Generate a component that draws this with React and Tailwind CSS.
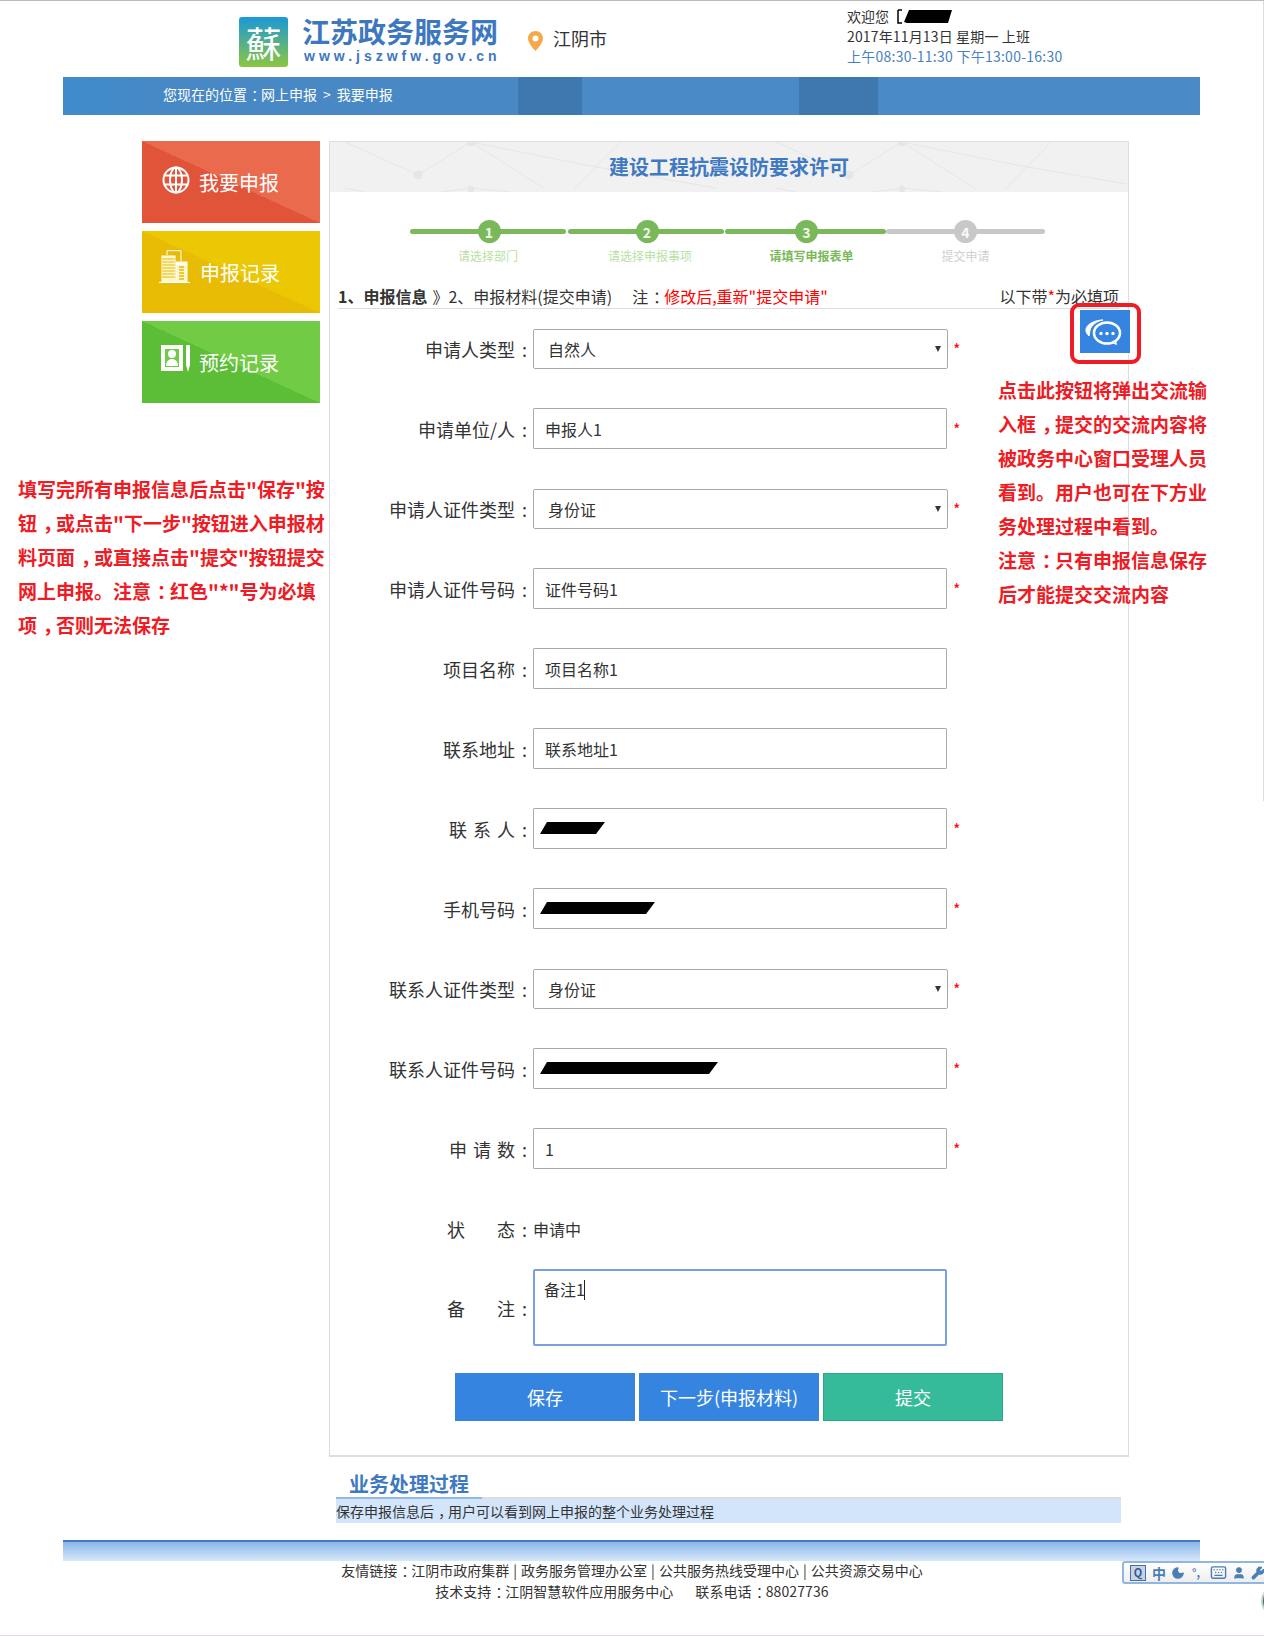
import React from 'react';
import { Moon, User, Wrench, Keyboard } from 'lucide-react';

const rows = [
  { label: '申请人类型', type: 'select', value: '自然人', required: true },
  { label: '申请单位/人', value: '申报人1', required: true },
  { label: '申请人证件类型', type: 'select', value: '身份证', required: true },
  { label: '申请人证件号码', value: '证件号码1', required: true },
  { label: '项目名称', value: '项目名称1' },
  { label: '联系地址', value: '联系地址1' },
  { label: '联 系 人', value: '', required: true, redact: 65 },
  { label: '手机号码', value: '', required: true, redact: 115 },
  { label: '联系人证件类型', type: 'select', value: '身份证', required: true },
  { label: '联系人证件号码', value: '', required: true, redact: 178 },
  { label: '申 请 数', value: '1', required: true },
];

const steps = [
  { n: 1, text: '请选择部门', w: 'w-[156px]', bar: 'bg-[#7ab85a]', dot: 'bg-[#7ab85a] ml-[2px]', color: 'text-[#b9dfa3]' },
  { n: 2, text: '请选择申报事项', w: 'w-[156px] ml-[2px]', bar: 'bg-[#7ab85a]', dot: 'bg-[#7ab85a] ml-[2px]', color: 'text-[#b9dfa3] ml-[8px]' },
  { n: 3, text: '请填写申报表单', w: 'w-[161px] ml-[1px]', bar: 'bg-[#7ab85a]', dot: 'bg-[#7ab85a] ml-[2px]', color: 'text-[#7ab85a] font-bold ml-[12px]' },
  { n: 4, text: '提交申请', w: 'w-[159px]', bar: 'bg-[#c8c8c8]', dot: 'bg-[#c8c8c8]', color: 'text-[#d0d0d0]' },
];

const noteLeft = [
  '填写完所有申报信息后点击"保存"按',
  '钮，或点击"下一步"按钮进入申报材',
  '料页面，或直接点击"提交"按钮提交',
  '网上申报。注意：红色"*"号为必填',
  '项，否则无法保存',
];

const noteRight = [
  '点击此按钮将弹出交流输',
  '入框，提交的交流内容将',
  '被政务中心窗口受理人员',
  '看到。用户也可在下方业',
  '务处理过程中看到。',
  '注意：只有申报信息保存',
  '后才能提交交流内容',
];

// 全角冒号、逗号在原图里靠中间，SC 字形靠左，挪一下
function punct(text) {
  return text.split(/([：，])/).map((part, i) =>
    part === '：' || part === '，'
      ? <span key={i} className="ml-[0.3em] tracking-[-0.3em]">{part}</span>
      : part
  );
}

function GlobeIcon() {
  return (
    <svg width="28" height="28" viewBox="0 0 28 28" fill="none" stroke="white" strokeWidth="2">
      <circle cx="14" cy="14" r="12.5" />
      <ellipse cx="14" cy="14" rx="6" ry="12.5" />
      <path d="M14 1.5v25M2 9.5h24M2 18.5h24" />
    </svg>
  );
}

function BuildingIcon() {
  return (
    <svg width="32" height="33" viewBox="0 0 32 33" fill="none" stroke="white" strokeWidth="1">
      <path d="M0 32.5h31" strokeWidth="1.2" />
      <path d="M8 5V.7h14V11" />
      <rect x="3" y="6" width="13" height="26" fill="#fff6c8" />
      <path d="M3 9h13M3 12h13M3 15h13M3 18h13M3 21h13M3 24h13M3 27h13" stroke="#e8bb05" />
      <rect x="17" y="12" width="11" height="20" fill="#fff6c8" />
      <path d="M17 14h11" strokeWidth="2" />
      <path d="M20 17h5M20 20h5M20 23h5M20 26h5M20 29h5" stroke="#e8bb05" strokeWidth="1.5" />
    </svg>
  );
}

function CardIcon() {
  return (
    <svg width="30" height="28" viewBox="0 0 30 28">
      <rect x="0" y="0" width="22" height="26" fill="white" />
      <rect x="4" y="4" width="14" height="18" fill="#72cb45" />
      <circle cx="11" cy="9" r="4" fill="white" />
      <path d="M5 21c0-5 3-7 6-7s6 2 6 7z" fill="white" />
      <path d="M25 1.5a2 2 0 0 1 4 0V20l-2 7-2-7z" fill="white" />
    </svg>
  );
}

function Star({ className = '' }) {
  return <span className={`text-[16px] leading-none text-[#f00] ${className}`}>*</span>;
}

function SideButton({ bg, icon, iconClass, children, textClass }) {
  return (
    <div className={`flex h-[82px] w-[178px] items-center text-[20px] text-white ${bg}`}>
      <div className={iconClass}>{icon}</div>
      <span className={textClass}>{children}</span>
    </div>
  );
}

function Redaction({ width }) {
  return (
    <svg className="absolute top-[13px] left-[7px]" width={width} height="14" viewBox={`0 0 ${width} 14`}>
      <polygon points={`7,1 ${width},1 ${width - 9},13 0,13`} fill="black" />
    </svg>
  );
}

function Colon() {
  return <span className="ml-[7px]">:</span>;
}

function FormRow({ row }) {
  const spaced = row.label.includes(' ');
  return (
    <div className="flex h-[80px] items-center">
      <label className="w-[197px] text-right text-[18px] whitespace-pre text-[#333]">
        <span className={spaced ? '[word-spacing:2px]' : ''}>{row.label}</span>
        <Colon />
      </label>
      {row.type === 'select' ? (
        <div className="relative ml-[6px] h-[40px] w-[415px]">
          <select
            defaultValue={row.value}
            className="h-full w-full appearance-none rounded-[2px] border border-[#aaa] bg-white pl-[14px] text-[16px] text-[#333]"
          >
            <option>{row.value}</option>
          </select>
          <span className="absolute top-[17px] right-[7px] h-0 w-0 border-x-[3.5px] border-t-[6px] border-x-transparent border-t-[#333]" />
        </div>
      ) : (
        <div className="relative -mt-[1px] ml-[6px] h-[41px] w-[414px]">
          <input
            defaultValue={row.value}
            className="h-full w-full rounded-[1px] border border-[#aaa] bg-white px-[11px] text-[16px] text-[#333]"
          />
          {row.redact && <Redaction width={row.redact} />}
        </div>
      )}
      {row.required && <Star className={`mt-0 ${row.type === 'select' ? 'ml-[5px]' : 'ml-[6px]'}`} />}
    </div>
  );
}

function ImeBar() {
  const blue = '#4a7fb5';
  return (
    <div className="absolute top-[1560px] left-[1122px] flex h-[23px] w-[150px] items-center overflow-hidden rounded-l-[3px] border-2 border-[#92b6e2] bg-[linear-gradient(#ffffff,#eeeeee)] pl-[6px]">
      <div className="flex h-[16px] w-[16px] items-center justify-center border border-[#4a6fa5] bg-[#c5d3e8] text-[11px] leading-none font-bold text-[#36598c]">Q</div>
      <span className="ml-[6px] w-[14px] text-[14px] leading-none font-bold text-[#4a7fb5]">中</span>
      <Moon className="ml-[5px]" size={14} color={blue} fill={blue} />
      <span className="ml-[7px] w-[12px] text-[11px] leading-none font-bold text-[#4a7fb5]">°,</span>
      <Keyboard className="ml-[6px]" size={17} color={blue} />
      <User className="ml-[5px]" size={14} color={blue} fill={blue} />
      <Wrench className="ml-[5px] shrink-0" size={14} color={blue} fill={blue} />
    </div>
  );
}

export default function App() {
  return (
    <div className="relative h-[1636px] w-[1264px] overflow-hidden border-t border-b border-t-[#bbb] border-b-[#e3dde6] bg-white font-['Noto_Sans_CJK_SC',sans-serif] text-[#333]">
      {/* header */}
      <header className="flex h-[76px] pl-[239px]">
        <div className="mt-[16px] flex h-[50px] w-[49px] items-center justify-center rounded-[3px] bg-[linear-gradient(#1a98d8,#8cc63f)] font-['Noto_Sans_CJK_TC',sans-serif] text-[36px] leading-[50px] text-white">
          蘇
        </div>
        <div className="ml-[14px] w-[210px] text-[#3d78bf]">
          <div className="mt-[12px] h-[34px] text-[28px] leading-[36px] font-bold">江苏政务服务网</div>
          <div className="ml-[2px] font-['Liberation_Sans',sans-serif] text-[14px] leading-[18px] font-bold tracking-[4px]">www.jszwfw.gov.cn</div>
        </div>
        <div className="ml-[16px] flex h-[76px] items-center">
          <svg width="15" height="20" viewBox="0 0 15 20" className="mt-[3px]">
            <path fillRule="evenodd" fill="#f5a94a" d="M7.5 0C3.4 0 0 3.2 0 7.2 0 11.5 4.7 17 7.5 20c2.8-3 7.5-8.5 7.5-12.8C15 3.2 11.6 0 7.5 0zm0 4.4a3 3 0 1 1 0 6 3 3 0 0 1 0-6z" />
          </svg>
          <span className="ml-[10px] -mt-[1px] text-[18px]">江阴市</span>
        </div>
        <div className="ml-[240px] pt-[5px] text-[14px] leading-[20px]">
          <div className="flex items-center">
            欢迎您
            <svg className="ml-[8px]" width="56" height="15" viewBox="0 0 56 15">
              <path d="M1 1h4M1 1v13h4" fill="none" stroke="black" strokeWidth="1.5" />
              <polygon points="7,13 12,1 55,1 51,14 10,14" fill="black" />
            </svg>
          </div>
          <div className="tracking-[0.15px]">2017年11月13日 星期一 上班</div>
          <div className="tracking-[0.25px] text-[#4a7fc1]">上午08:30-11:30 下午13:00-16:30</div>
        </div>
      </header>

      {/* breadcrumb */}
      <div className="mx-[63px] flex h-[38px] w-[1137px] items-center bg-[linear-gradient(90deg,#3f8bcb_0,#4888c4_120px,#4888c4_455px,#3f78ae_455px,#3f78ae_519px,#4a8bc7_519px,#4a8bc7_736px,#3f78ae_736px,#3f78ae_815px,#4a8bc7_815px)] pb-[4px] pl-[100px] text-[14px] whitespace-pre text-white">
        {punct('您现在的位置：网上申报')}
        <span className="mx-[6px]">&gt;</span>
        我要申报
      </div>

      {/* main */}
      <div className="mt-[26px] ml-[142px] flex items-start">
        <aside className="flex w-[178px] flex-col gap-[8px]">
          <SideButton
            bg="bg-[linear-gradient(to_top_right,#e2543a_50%,#e96a4c_50%)]"
            icon={<GlobeIcon />}
            iconClass="ml-[20px] -mt-[5px]"
            textClass="ml-[9px] mt-[2px]"
          >
            我要申报
          </SideButton>
          <SideButton
            bg="bg-[linear-gradient(to_top_right,#e8bb05_50%,#ecc704_50%)]"
            icon={<BuildingIcon />}
            iconClass="ml-[17px] -mt-[11px]"
            textClass="ml-[9px] mt-[2px]"
          >
            申报记录
          </SideButton>
          <SideButton
            bg="bg-[linear-gradient(to_top_right,#5cbd36_50%,#72cb45_50%)]"
            icon={<CardIcon />}
            iconClass="ml-[19px] -mt-[7px]"
            textClass="ml-[8px] mt-[1px]"
          >
            预约记录
          </SideButton>
        </aside>

        <section className="ml-[9px] h-[1316px] w-[800px] border border-b-2 border-[#dedede]">
          <div className="relative flex h-[50px] items-center justify-center overflow-hidden bg-[#f1f1f1]">
            <svg className="absolute inset-0" width="798" height="50" fill="none" stroke="#e6e6e6" strokeWidth="1">
              <path d="M15 0l73 33 53-33 74 47M141 0l120 24 125 22M290 0l-46 47M15 46l20 4M141 46l-30 4M141 46l40 4" />
              <path d="M446 0l73 33 53-33 74 47M572 0l120 24 105 18M721 0l-46 47M446 46l20 4M572 46l-30 4M572 46l40 4" />
              <circle cx="88" cy="33" r="4" fill="#e6e6e6" />
              <circle cx="519" cy="33" r="4" fill="#e6e6e6" />
              <circle cx="141" cy="0" r="4" fill="#e6e6e6" />
              <circle cx="572" cy="0" r="4" fill="#e6e6e6" />
              <circle cx="141" cy="47" r="3" fill="#e6e6e6" />
              <circle cx="572" cy="47" r="3" fill="#e6e6e6" />
            </svg>
            <h1 className="relative text-[20px] font-bold text-[#3f79c2]">建设工程抗震设防要求许可</h1>
          </div>

          {/* steps */}
          <div className="flex h-[90px] pt-[28px] pl-[80px]">
            {steps.map((s) => (
              <div key={s.n} className={`flex flex-col items-center ${s.w}`}>
                <div className="relative flex h-[23px] w-full items-center justify-center">
                  <div className={`absolute top-[9px] left-0 h-[5px] w-full rounded-full ${s.bar}`} />
                  <div className={`relative flex h-[23px] w-[23px] items-center justify-center rounded-full text-[14px] leading-none font-bold text-white/90 ${s.dot}`}>
                    {s.n}
                  </div>
                </div>
                <div className={`mt-[5px] text-[12px] leading-[16px] ${s.color}`}>{s.text}</div>
              </div>
            ))}
          </div>

          {/* tabs */}
          <div className="ml-[8px] flex h-[27px] w-[781px] items-center border-b border-[#ddd] pt-[2px] text-[16px] whitespace-pre">
            <b>1、申报信息</b>
            <span className="ml-[5px]">》2、申报材料(提交申请)</span>
            <span className="ml-[20px]">{punct('注：')}</span>
            <span className="text-[#f00]">修改后,重新"提交申请"</span>
            <span className="ml-auto">
              以下带<span className="text-[#f00]">*</span>为必填项
            </span>
          </div>

          {rows.map((row) => (
            <FormRow key={row.label} row={row} />
          ))}

          <div className="flex h-[80px] items-center text-[18px]">
            <label className="w-[197px] text-right whitespace-pre">
              <span className="[word-spacing:28px]">状 态</span>
              <Colon />
            </label>
            <span className="ml-[6px] text-[16px]">申请中</span>
          </div>

          <div className="flex h-[77px] items-center">
            <label className="mt-[2px] w-[197px] text-right text-[18px] whitespace-pre">
              <span className="[word-spacing:28px]">备 注</span>
              <Colon />
            </label>
            <div className="relative ml-[6px] h-[77px] w-[414px]">
              <textarea
                defaultValue="备注1"
                className="h-full w-full resize-none rounded-[2px] border-2 border-[#7a9fe0] bg-white px-[9px] py-[6px] text-[16px] leading-[24px] text-[#333] outline-none"
              />
              <span className="absolute top-[11px] left-[51px] h-[20px] w-px bg-[#222]" />
            </div>
          </div>

          <div className="mt-[27px] ml-[125px] flex gap-[4px] text-[18px] text-white">
            <button className="h-[48px] w-[180px] bg-[#3585e0]">保存</button>
            <button className="h-[48px] w-[180px] bg-[#3585e0]">下一步(申报材料)</button>
            <button className="h-[48px] w-[180px] border border-[#2ea585] bg-[#36bb9a]">提交</button>
          </div>
        </section>
      </div>

      {/* process */}
      <div className="ml-[336px] w-[785px]">
        <div className="border-b-2 border-[#ddd]">
          <div className="-mb-[2px] h-[42px] w-[146px] border-b-2 border-[#8fb9e6] pt-[14px] pl-[13px] text-[20px] leading-[26px] font-bold text-[#3f79c2]">
            业务处理过程
          </div>
        </div>
        <div className="flex h-[24px] items-center whitespace-pre bg-[#d2e5fa] text-[14px]">
          <span>{punct('保存申报信息后，用户可以看到网上申报的整个业务处理过程')}</span>
        </div>
      </div>

      {/* footer */}
      <div className="mx-[63px] mt-[17px] h-[21px] w-[1137px] border-t-2 border-[#4478c0] bg-[linear-gradient(#8ab6e8,#d8e8fa)]" />
      <footer className="-mt-[1px] text-center text-[14px] leading-[21px]">
        <div>
          {punct('友情链接：江阴市政府集群')}
          <span className="mx-[4px]">|</span>政务服务管理办公室
          <span className="mx-[4px]">|</span>公共服务热线受理中心
          <span className="mx-[4px]">|</span>公共资源交易中心
        </div>
        <div>
          {punct('技术支持：江阴智慧软件应用服务中心')}
          <span className="ml-[22px] tracking-[0.1px]">{punct('联系电话：88027736')}</span>
        </div>
      </footer>

      {/* annotations */}
      <div className="absolute top-[471px] left-[18px] text-[19px] leading-[34px] font-bold whitespace-nowrap text-[#ee1c25]">
        {noteLeft.map((line) => (
          <div key={line}>{punct(line)}</div>
        ))}
      </div>
      <div className="absolute top-[302px] left-[1070px] flex h-[61px] w-[71px] items-center justify-center rounded-[9px] border-4 border-[#ee1c25]">
        <div className="-mt-[4px] -ml-[2px] flex h-[43px] w-[50px] items-center justify-center bg-[#3585e0]">
          <svg width="50" height="43" viewBox="0 0 50 43" fill="none">
            <path d="M23 10c-8 0-16 4-17 9-.5 3 1 5 3 7l1-6c1.5-5 7-9 13-10z" fill="white" stroke="white" />
            <ellipse cx="27" cy="23" rx="13" ry="10.5" stroke="white" strokeWidth="2.5" />
            <path d="M31 33l6 2-1-5" fill="white" />
            <circle cx="21" cy="23.5" r="1.7" fill="white" />
            <circle cx="27" cy="23.5" r="1.7" fill="white" />
            <circle cx="33" cy="23.5" r="1.7" fill="white" />
          </svg>
        </div>
      </div>
      <div className="absolute top-[372px] left-[998px] text-[19px] leading-[34px] font-bold whitespace-nowrap text-[#ee1c25]">
        {noteRight.map((line) => (
          <div key={line}>{punct(line)}</div>
        ))}
      </div>

      <ImeBar />
      <div className="absolute top-[1584px] left-[1261px] h-[32px] w-[32px] rounded-full border-2 border-[#ccc] bg-[#1e7a5c]" />
      <div className="absolute top-0 right-0 h-[800px] w-px bg-[#ddd]" />
    </div>
  );
}
